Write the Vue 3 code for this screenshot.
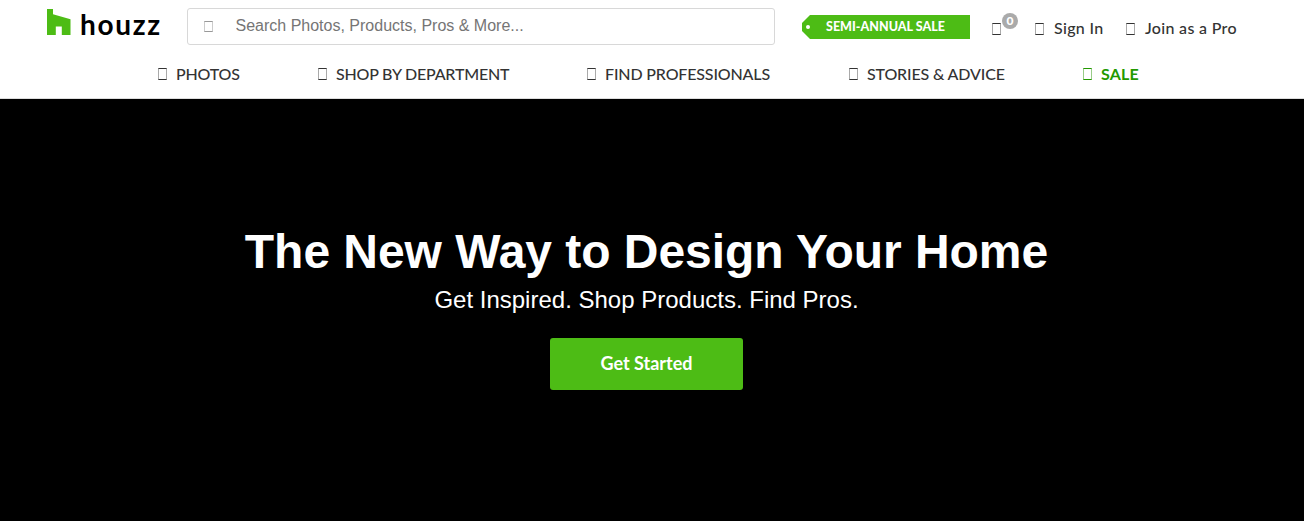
<template>
    <div class="page">
        <header class="header">
            <div class="top-bar">
                <a class="logo" href="#">
                    <svg class="logo-mark" viewBox="0 0 24 26" width="24" height="26">
                        <path d="M0 0H6V5.3L23.5 10.2V26H14.8V17.5H8.8V26H0Z" fill="#4dbc15" />
                    </svg>
                    <span class="logo-text">houzz</span>
                </a>
                <label class="search">
                    <span class="glyph glyph-search"></span>
                    <input type="text" placeholder="Search Photos, Products, Pros &amp; More..." />
                </label>
                <a class="sale-tag" href="#">
                    <svg class="tag-tip" viewBox="0 0 9 24" width="9" height="24">
                        <path d="M9 0H8L0 8V16L8 24H9Z" fill="#4dbc15" />
                        <circle cx="6" cy="12" r="2" fill="#fff" />
                    </svg>
                    <span class="tag-body">SEMI-ANNUAL SALE</span>
                </a>
                <a class="cart" href="#">
                    <span class="glyph"></span>
                    <span class="badge">{{ cartCount }}</span>
                </a>
                <a class="user-link sign-in" href="#"><span class="glyph"></span><span>Sign In</span></a>
                <a class="user-link join" href="#"><span class="glyph"></span><span>Join as a Pro</span></a>
            </div>
            <nav class="nav">
                <a v-for="item in navItems" :key="item.name" href="#" :class="['nav-item', item.name]">
                    <span class="glyph"></span>
                    <span class="nav-label">{{ item.label }}</span>
                </a>
            </nav>
        </header>
        <main class="hero">
            <h1>The New Way to Design Your Home</h1>
            <p>Get Inspired. Shop Products. Find Pros.</p>
            <button class="start-btn">Get Started</button>
        </main>
    </div>
</template>

<script setup>
import { ref } from 'vue'

const cartCount = ref(0)

const navItems = [
    { name: 'photos', label: 'PHOTOS' },
    { name: 'shop', label: 'SHOP BY DEPARTMENT' },
    { name: 'pros', label: 'FIND PROFESSIONALS' },
    { name: 'stories', label: 'STORIES & ADVICE' },
    { name: 'sale', label: 'SALE' }
]
</script>

<style>
body {
    margin: 0;
    background: #000;
}
</style>

<style scoped>
.page {
    height: 521px;
    display: flex;
    flex-direction: column;
    overflow: hidden;
    font-family: Lato, "Liberation Sans", sans-serif;
    color: #333;
}

a {
    color: inherit;
    text-decoration: none;
}

.header {
    box-sizing: border-box;
    height: 99px;
    background: #fff;
    border-bottom: 1px solid #ddd;
}

.top-bar {
    display: flex;
    align-items: flex-start;
    height: 53px;
    padding-left: 47px;
}

.logo {
    display: flex;
    width: 140px;
    padding-top: 9px;
}

.logo-text {
    margin: -1px 0 0 9px;
    font-size: 28px;
    line-height: 32px;
    font-weight: 700;
    letter-spacing: 1.7px;
    color: #000;
}

/* empty icon boxes */
.glyph {
    flex: none;
    box-sizing: border-box;
    width: 9px;
    height: 12px;
    border: 1px solid #333;
    border-left-color: #aaa;
    border-right-color: #aaa;
}

.search {
    box-sizing: border-box;
    display: flex;
    align-items: center;
    width: 588px;
    height: 37px;
    margin-top: 8px;
    padding-left: 16px;
    border: 1px solid #d8d8d8;
    border-radius: 3px;
}

.glyph-search {
    height: 11px;
    border-color: #999 #ccc;
}

.search input {
    flex: 1;
    height: 33px;
    margin: 0 0 2px 22.5px;
    padding: 0;
    border: 0;
    outline: 0;
    background: none;
    font: 16px "Liberation Sans", sans-serif;
}

.search input::placeholder {
    color: #757575;
}

.sale-tag {
    display: flex;
    margin: 15px 0 0 27px;
}

.tag-body {
    width: 144px;
    padding-left: 15px;
    background: #4dbc15;
    color: #fff;
    font-size: 12.5px;
    line-height: 24px;
    font-weight: 900;
    letter-spacing: 0.02px;
    white-space: nowrap;
}

.cart {
    position: relative;
    margin: 23px 0 0 22px;
}

.cart .glyph {
    display: block;
}

.badge {
    position: absolute;
    left: 10px;
    top: -10px;
    width: 16px;
    height: 16px;
    border-radius: 50%;
    background: #aaa;
    color: #fff;
    font-size: 12px;
    line-height: 16px;
    font-weight: 900;
    text-align: center;
}

.user-link {
    display: flex;
    align-items: center;
    gap: 10px;
    margin-top: 19px;
    font-size: 16px;
    line-height: 20px;
    font-weight: 500;
    letter-spacing: 0.32px;
    white-space: nowrap;
}

.user-link span:last-child {
    margin-top: -1px;
}

.sign-in {
    width: 91px;
    margin-left: 34px;
}

.nav {
    display: grid;
    grid-template-columns: 160px 269px 262px 234px auto;
    padding-left: 158px;
}

.nav-item {
    display: flex;
    align-items: center;
    gap: 9px;
    font-size: 16px;
    line-height: 42px;
    font-weight: 500;
    letter-spacing: -0.15px;
    white-space: nowrap;
}

.photos,
.shop {
    letter-spacing: -0.2px;
}

.sale {
    color: #290;
    font-weight: 700;
    letter-spacing: 0.2px;
}

.sale .glyph {
    border-color: #290 #9c8;
}

.hero {
    flex: 1;
    display: flex;
    flex-direction: column;
    align-items: center;
    padding-right: 11px;
    background: #000;
    color: #fff;
}

h1 {
    margin: 125px 0 0;
    font: bold 48px/56px "Liberation Sans", sans-serif;
    letter-spacing: -0.04px;
}

p {
    margin: 5px 0 0;
    font: 24px/30px "Liberation Sans", sans-serif;
}

.start-btn {
    width: 193px;
    height: 52px;
    margin-top: 22.5px;
    padding: 0 0 2px;
    border: 0;
    border-radius: 3px;
    background: #4dbc15;
    color: #fff;
    font: 700 18px Lato, sans-serif;
}
</style>
